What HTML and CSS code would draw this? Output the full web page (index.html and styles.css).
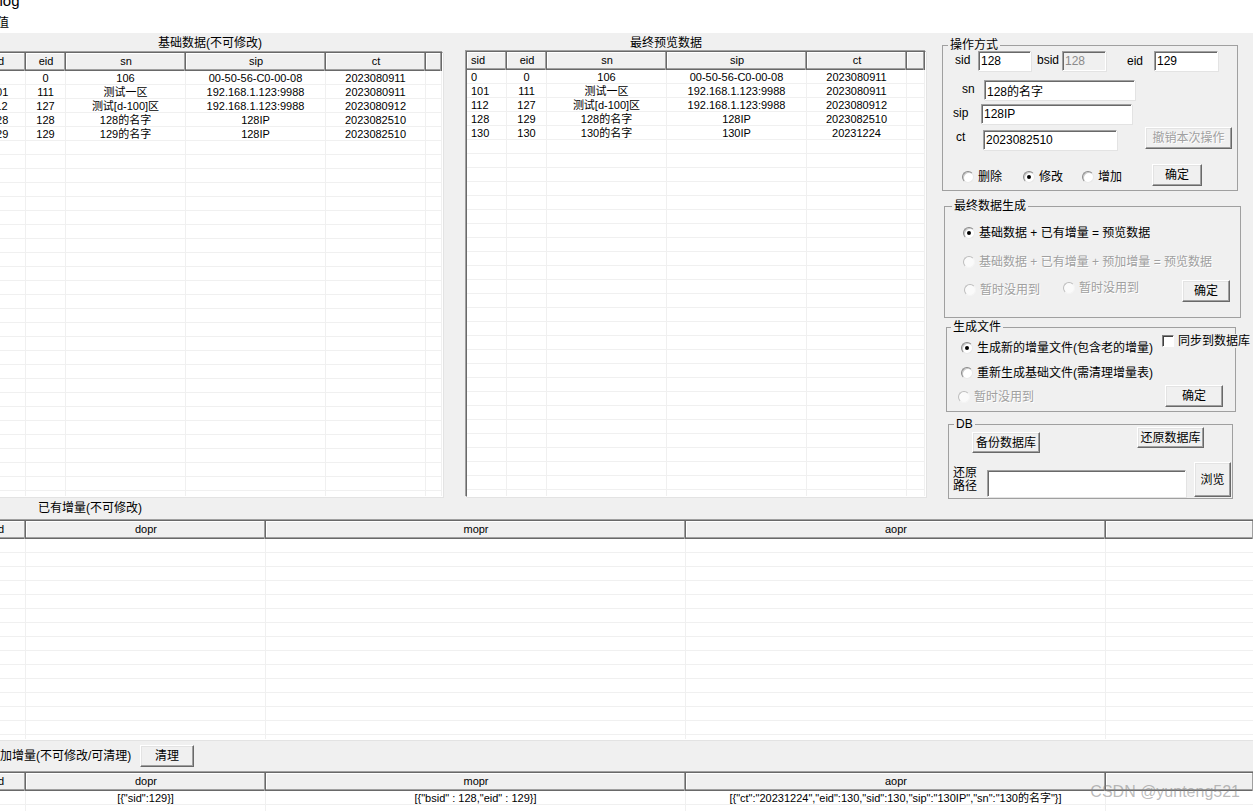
FILE: index.html
```html
<!DOCTYPE html>
<html lang="zh-CN">
<head>
<meta charset="utf-8">
<title>Dialog</title>
<link rel="stylesheet" href="styles.css">
</head>
<body>
<div class="win">
  <div class="caption"><span class="cap-text">Dialog</span></div>
  <div class="menubar"><span class="menu-item">值</span></div>
  <div class="client">
    <div class="upper">
      <div class="lists">
        <section class="pane pane1">
          <div class="pane-title">基础数据(不可修改)</div>
          <div class="grid g-data">
            <div class="hdr"><div class="l">sid</div><div>eid</div><div>sn</div><div>sip</div><div>ct</div><div></div></div>
            <div class="row"><div class="l">0</div><div>0</div><div>106</div><div>00-50-56-C0-00-08</div><div>2023080911</div><div></div></div>
            <div class="row"><div class="l">101</div><div>111</div><div>测试一区</div><div>192.168.1.123:9988</div><div>2023080911</div><div></div></div>
            <div class="row"><div class="l">112</div><div>127</div><div>测试[d-100]区</div><div>192.168.1.123:9988</div><div>2023080912</div><div></div></div>
            <div class="row"><div class="l">128</div><div>128</div><div>128的名字</div><div>128IP</div><div>2023082510</div><div></div></div>
            <div class="row"><div class="l">129</div><div>129</div><div>129的名字</div><div>128IP</div><div>2023082510</div><div></div></div>
            <div class="fill"><div></div><div></div><div></div><div></div><div></div><div></div></div>
          </div>
        </section>
        <section class="pane pane2">
          <div class="pane-title">最终预览数据</div>
          <div class="grid g-data">
            <div class="hdr"><div class="l">sid</div><div>eid</div><div>sn</div><div>sip</div><div>ct</div><div></div></div>
            <div class="row"><div class="l">0</div><div>0</div><div>106</div><div>00-50-56-C0-00-08</div><div>2023080911</div><div></div></div>
            <div class="row"><div class="l">101</div><div>111</div><div>测试一区</div><div>192.168.1.123:9988</div><div>2023080911</div><div></div></div>
            <div class="row"><div class="l">112</div><div>127</div><div>测试[d-100]区</div><div>192.168.1.123:9988</div><div>2023080912</div><div></div></div>
            <div class="row"><div class="l">128</div><div>129</div><div>128的名字</div><div>128IP</div><div>2023082510</div><div></div></div>
            <div class="row"><div class="l">130</div><div>130</div><div>130的名字</div><div>130IP</div><div>20231224</div><div></div></div>
            <div class="fill"><div></div><div></div><div></div><div></div><div></div><div></div></div>
          </div>
        </section>
      </div>

      <aside class="side">
        <div class="gb gb1">
          <div class="gb-title">操作方式</div>
          <div class="gb-body">
            <div class="fr g1r1">
              <span class="lbl lbl-sid">sid</span><input class="tb w53" value="128">
              <span class="lbl lbl-bsid">bsid</span><input class="tb w44" value="128" disabled>
              <span class="lbl lbl-eid">eid</span><input class="tb w64" value="129">
            </div>
            <div class="fr g1r2">
              <span class="lbl lbl-sn">sn</span><input class="tb w151" value="128的名字">
            </div>
            <div class="fr g1r3">
              <span class="lbl lbl-sip">sip</span><input class="tb w151" value="128IP">
            </div>
            <div class="fr g1r4">
              <span class="lbl lbl-ct">ct</span><input class="tb w134" value="2023082510">
              <button class="btn btn-undo dis" disabled>撤销本次操作</button>
            </div>
            <div class="fr g1r5">
              <span class="ri ri-del"><span class="rb"></span>删除</span>
              <span class="ri ri-mod"><span class="rb on"></span>修改</span>
              <span class="ri ri-add"><span class="rb"></span>增加</span>
              <button class="btn btn-ok50">确定</button>
            </div>
          </div>
        </div>

        <div class="gb gb2">
          <div class="gb-title">最终数据生成</div>
          <div class="gb-body">
            <div class="fr g2r1">
              <span class="ri"><span class="rb on"></span>基础数据 + 已有增量 = 预览数据</span>
            </div>
            <div class="fr g2r2">
              <span class="ri dis"><span class="rb off"></span>基础数据 + 已有增量 + 预加增量 = 预览数据</span>
            </div>
            <div class="fr g2r3">
              <span class="ri dis ri-n1"><span class="rb off"></span>暂时没用到</span>
              <span class="ri dis ri-n2"><span class="rb off"></span>暂时没用到</span>
              <button class="btn btn-ok48">确定</button>
            </div>
          </div>
        </div>

        <div class="gb gb3">
          <div class="gb-title">生成文件</div>
          <div class="gb-body">
            <div class="fr g3r1">
              <span class="ri ri-new"><span class="rb on"></span>生成新的增量文件(包含老的增量)</span>
              <span class="ck"><span class="cb"></span>同步到数据库</span>
            </div>
            <div class="fr g3r2">
              <span class="ri"><span class="rb"></span>重新生成基础文件(需清理增量表)</span>
            </div>
            <div class="fr g3r3">
              <span class="ri dis ri-n3"><span class="rb off"></span>暂时没用到</span>
              <button class="btn btn-ok58">确定</button>
            </div>
          </div>
        </div>

        <div class="gb gb4">
          <div class="gb-title">DB</div>
          <div class="gb-body">
            <div class="fr g4r1">
              <button class="btn btn-backup">备份数据库</button>
              <button class="btn btn-restore">还原数据库</button>
            </div>
            <div class="fr g4r2">
              <span class="lbl lbl-path">还原<br>路径</span>
              <input class="tb tb-path" value="">
              <button class="btn btn-browse">浏览</button>
            </div>
          </div>
        </div>
      </aside>
    </div>

    <div class="sect-label">已有增量(不可修改)</div>
    <div class="grid g-incr g3">
      <div class="hdr"><div class="l">sid</div><div>dopr</div><div>mopr</div><div>aopr</div><div></div></div>
      <div class="fill"><div></div><div></div><div></div><div></div><div></div></div>
    </div>

    <div class="sect-bar">
      <span class="sect-bar-label">预加增量(不可修改/可清理)</span>
      <button class="btn btn-clear">清理</button>
    </div>
    <div class="grid g-incr g4">
      <div class="hdr"><div class="l">sid</div><div>dopr</div><div>mopr</div><div>aopr</div><div></div></div>
      <div class="row"><div class="l"></div><div>[{"sid":129}]</div><div>[{"bsid" : 128,"eid" : 129}]</div><div>[{"ct":"20231224","eid":130,"sid":130,"sip":"130IP","sn":"130的名字"}]</div><div></div></div>
      <div class="fill"><div></div><div></div><div></div><div></div><div></div></div>
    </div>
  </div>
</div>
<div class="watermark">CSDN @yunteng521</div>
</body>
</html>
```

FILE: styles.css
```css
* { box-sizing: border-box; }
html, body { margin: 0; padding: 0; }
body {
  width: 1253px;
  height: 811px;
  overflow: hidden;
  position: relative;
  background: #f0f0f0;
  color: #000;
  font-family: "Liberation Sans", "Noto Sans CJK SC", sans-serif;
  font-size: 12px;
  line-height: 14px;
}

.win { width: 1270px; margin-left: -15px; }

/* caption + menu */
.caption { height: 12px; background: #fff; overflow: hidden; }
.cap-text {
  display: block;
  margin: -7px 0 0 -8px;
  font-size: 15px;
  line-height: 15px;
  white-space: nowrap;
}
.menubar {
  height: 21px;
  background: #fff;
  padding: 3px 0 0 12px;
  line-height: 16px;
  font-size: 12px;
}

/* upper section */
.upper { display: flex; height: 467px; }
.lists { display: flex; gap: 23px; flex: none; }
.pane { display: flex; flex-direction: column; height: 464px; }
.pane1 { width: 458px; }
.pane2 { width: 460px; }
.pane-title {
  flex: none;
  height: 19px;
  padding-top: 2px;
  line-height: 16px;
  white-space: nowrap;
}
.pane1 .pane-title { padding-left: 173px; }
.pane2 .pane-title { height: 18px; padding-left: 164px; }

/* list grids */
.grid {
  flex: 1;
  display: flex;
  flex-direction: column;
  background: #fff;
  border: 1px solid;
  border-color: #696969 #fff #fff #696969;
  box-shadow: -1px -1px 0 #a0a0a0, 1px 1px 0 #e3e3e3;
  overflow: hidden;
  font-size: 11px;
}
.g-data { --cols: 40px 40px 120px 140px 100px 1fr; }
.g-incr { --cols: 40px 240px 420px 420px 1fr; }
.g3 { height: 220px; }
.g4 { height: 60px; }

.hdr, .row, .fill { display: grid; grid-template-columns: var(--cols); }
.hdr { height: 18px; flex: none; }
.hdr > div {
  background: #f0f0f0;
  text-align: center;
  line-height: 16px;
  white-space: nowrap;
  overflow: hidden;
  box-shadow: inset -1px 0 #696969, inset -2px 0 #a0a0a0, inset 0 -1px #696969, inset 0 -2px #a0a0a0, inset 1px 1px #fff;
}
.row { height: 14px; flex: none; }
.row > div {
  border-right: 1px solid #f0f0f0;
  border-bottom: 1px solid #f0f0f0;
  text-align: center;
  line-height: 14px;
  white-space: nowrap;
  overflow: hidden;
}
.hdr > .l, .row > .l { text-align: left; padding-left: 4px; }
.fill { flex: 1; }
.fill > div {
  border-right: 1px solid #f0f0f0;
  background: repeating-linear-gradient(to bottom, #fff 0 13px, #f0f0f0 13px 14px);
}

/* side panel */
.side { flex: none; width: 313px; margin-left: 16px; padding-top: 12px; }
.gb { border: 1px solid #a0a0a0; }
.gb-title {
  width: max-content;
  margin-top: -7px;
  padding: 0 2px;
  line-height: 12px;
  height: 12px;
  background: #f0f0f0;
  white-space: nowrap;
}
.gb-body { overflow: visible; }
.gb1 { width: 296px; height: 146px; }
.gb1 .gb-title { margin-left: 5px; }
.gb1 .gb-body { height: 139px; }
.gb2 { width: 297px; height: 112px; margin: 15px 0 0 2px; }
.gb2 .gb-title { margin-left: 7px; }
.gb2 .gb-body { height: 105px; }
.gb3 { width: 290px; height: 85px; margin: 9px 0 0 4px; }
.gb3 .gb-title { margin-left: 4px; }
.gb3 .gb-body { height: 78px; }
.gb4 { width: 285px; height: 75px; margin: 12px 0 0 6px; }
.gb4 .gb-title { margin-left: 5px; }
.gb4 .gb-body { height: 68px; }

.fr { display: flex; align-items: flex-start; }

.lbl { flex: none; white-space: nowrap; line-height: 14px; }

.tb {
  flex: none;
  height: 20px;
  margin: 0;
  padding: 0 2px;
  font: inherit;
  font-size: 12px;
  color: #000;
  background: #fff;
  border: 1px solid;
  border-color: #a0a0a0 #fff #fff #a0a0a0;
  box-shadow: inset 1px 1px 0 #696969, 1px 1px 0 #e3e3e3;
  outline: none;
}
.tb:disabled { background: #f0f0f0; color: #8a8a8a; }
.w53 { width: 53px; }
.w44 { width: 44px; }
.w64 { width: 64px; }
.w151 { width: 151px; }
.w134 { width: 134px; }

.btn {
  flex: none;
  margin: 0;
  padding: 0;
  font: inherit;
  font-size: 12px;
  color: #000;
  background: #f0f0f0;
  border: 1px solid;
  border-color: #fff #696969 #696969 #fff;
  box-shadow: inset -1px -1px 0 #a0a0a0, inset 1px 1px 0 #e3e3e3;
  white-space: nowrap;
}
.dis { color: #a0a0a0; text-shadow: 1px 1px 0 #fff; }
.btn.dis { color: #a0a0a0; }

/* group 1 rows */
.g1r1 .lbl { padding-top: 2px; }
.lbl-sid { margin-left: 12px; width: 23px; }
.lbl-bsid { margin-left: 6px; width: 25px; }
.g1r1 .lbl-eid { margin-left: 21px; width: 27px; padding-top: 3px; }
.g1r2 { margin-top: 9px; }
.lbl-sn { margin-left: 19px; width: 22px; padding-top: 2px; }
.g1r3 { margin-top: 4px; }
.lbl-sip { margin-left: 10px; width: 28px; padding-top: 2px; }
.g1r4 { margin-top: 3px; }
.lbl-ct { margin-left: 13px; width: 27px; padding-top: 3px; }
.g1r4 .tb { margin-top: 3px; }
.btn-undo { margin-left: 28px; width: 87px; height: 22px; }
.g1r5 { margin-top: 14px; }
.g1r5 .ri { margin-top: 6px; }
.ri-del { margin-left: 19px; width: 61px; }
.ri-mod { width: 59px; }
.ri-add { width: 70px; }
.btn-ok50 { width: 50px; height: 22px; }

/* radio / checkbox */
.ri {
  flex: none;
  display: flex;
  align-items: center;
  gap: 4px;
  height: 14px;
  white-space: nowrap;
}
.rb {
  flex: none;
  position: relative;
  width: 12px;
  height: 12px;
  border-radius: 50%;
  background: #fff;
  border: 1px solid;
  border-color: #8a8a8a #e8e8e8 #e8e8e8 #8a8a8a;
  box-shadow: inset 1px 1px 0 #c8c8c8;
}
.rb.off { border-color: #bdbdbd #f4f4f4 #f4f4f4 #bdbdbd; box-shadow: none; background: #fafafa; }
.rb.on::after {
  content: "";
  position: absolute;
  left: 3px;
  top: 3px;
  width: 4px;
  height: 4px;
  border-radius: 50%;
  background: #000;
}
.ck {
  flex: none;
  display: flex;
  align-items: center;
  gap: 4px;
  height: 14px;
  padding-right: 2px;
  background: #f0f0f0;
  white-space: nowrap;
}
.cb {
  flex: none;
  width: 12px;
  height: 12px;
  background: #fff;
  border: 1px solid;
  border-color: #808080 #fff #fff #808080;
  box-shadow: inset 1px 1px 0 #404040;
}

/* group 2 */
.g2r1 { margin-top: 14px; }
.g2r1 .ri, .g2r2 .ri { margin-left: 18px; }
.g2r2 { margin-top: 15px; }
.g2r3 { margin-top: 11px; }
.ri-n1 { margin-left: 19px; width: 99px; margin-top: 3px; }
.ri-n2 { width: 119px; margin-top: 1px; }
.btn-ok48 { width: 48px; height: 22px; }

/* group 3 */
.g3r1 { margin-top: 1px; }
.ri-new { margin-left: 14px; width: 201px; margin-top: 7px; }
.g3r2 { margin-top: 11px; }
.g3r2 .ri { margin-left: 14px; }
.g3r3 { margin-top: 5px; }
.ri-n3 { margin-left: 11px; width: 207px; margin-top: 5px; }
.btn-ok58 { width: 58px; height: 22px; }

/* group 4 */
.g4r1 { margin-top: -3px; }
.btn-backup { margin: 5px 0 0 23px; width: 68px; height: 21px; }
.btn-restore { margin-left: 97px; width: 67px; height: 21px; }
.g4r2 { margin-top: 9px; }
.lbl-path { margin: 5px 0 0 4px; width: 34px; line-height: 13px; }
.tb-path { width: 199px; height: 27px; margin-top: 8px; }
.btn-browse { margin-left: 8px; width: 37px; height: 35px; }

/* lower sections */
.sect-label {
  height: 20px;
  line-height: 17px;
  padding-left: 53px;
  white-space: nowrap;
}
.sect-bar {
  height: 32px;
  display: flex;
  align-items: center;
  padding-left: 3px;
}
.sect-bar-label { flex: none; width: 152px; white-space: nowrap; }
.btn-clear { width: 54px; height: 22px; }

.watermark {
  position: absolute;
  right: 13px;
  top: 783px;
  font-family: "Liberation Sans", sans-serif;
  font-size: 16px;
  line-height: 18px;
  color: rgba(130, 130, 130, 0.55);
  white-space: nowrap;
}
```
